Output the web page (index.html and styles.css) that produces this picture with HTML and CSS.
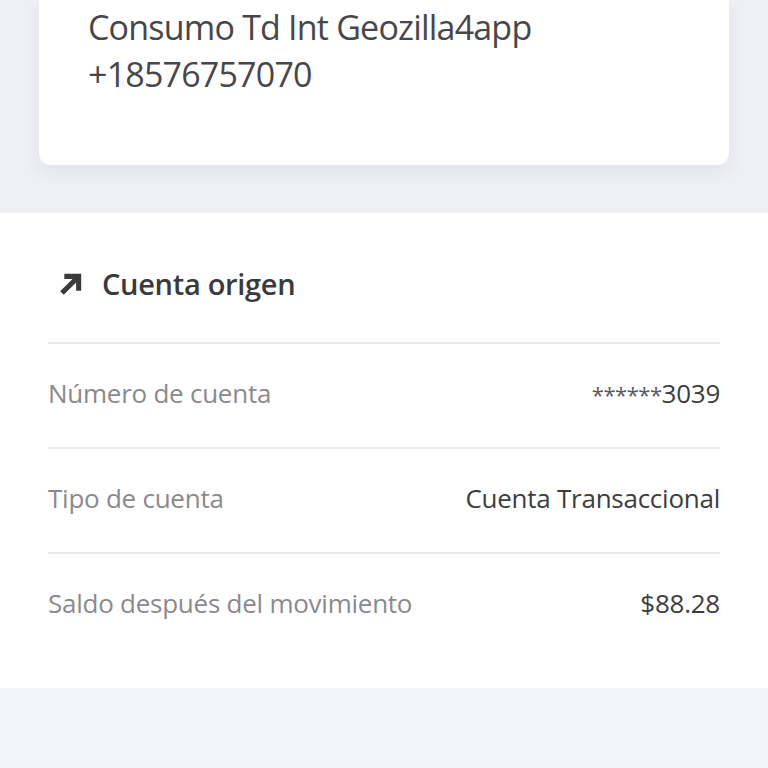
FILE: index.html
```html
<!DOCTYPE html>
<html lang="es">
<head>
<meta charset="utf-8">
<link rel="stylesheet" href="styles.css">
</head>
<body>
<div class="top">
  <div class="card">
    <p class="desc">Consumo Td Int Geozilla4app</p>
    <p class="desc">+18576757070</p>
  </div>
</div>
<section class="section">
  <div class="head">
    <svg class="arrow" viewBox="0 0 24 24" width="27" height="27">
      <path d="M6.5 2.5H21.5V17.5H17V10.2L6 21.2 2.8 18 13.8 7H6.5Z" fill="#3a3a3d"/>
    </svg>
    <h2 class="title">Cuenta origen</h2>
  </div>
  <div class="row"><span class="label">Número de cuenta</span><span class="value"><span class="mask">******</span>3039</span></div>
  <div class="row"><span class="label">Tipo de cuenta</span><span class="value">Cuenta Transaccional</span></div>
  <div class="row"><span class="label">Saldo después del movimiento</span><span class="value">$88.28</span></div>
</section>
<div class="bottom"></div>
</body>
</html>
```
FILE: styles.css
```css
html, body {
  margin: 0;
  padding: 0;
  background: #f4f5f9;
  font-family: "Open Sans", "Liberation Sans", sans-serif;
}
.top {
  background: #eff0f4;
  height: 213px;
  padding: 0 39px;
  box-sizing: border-box;
}
.card {
  background: #ffffff;
  height: 165px;
  box-sizing: border-box;
  padding: 4px 49px 0;
  border-radius: 0 0 12px 12px;
  box-shadow: 0 6px 18px rgba(40, 45, 70, 0.07);
}
.desc {
  margin: 0;
  font-size: 34px;
  line-height: 47px;
  color: #47474a;
  letter-spacing: -0.8px;
}
.section {
  background: #ffffff;
  padding: 0 48px 31px;
}
.head {
  display: flex;
  align-items: center;
  gap: 18px;
  height: 129px;
  box-sizing: border-box;
  padding: 48px 0 35px 9px;
}
.arrow {
  flex: none;
}
.title {
  margin: 0;
  font-size: 29px;
  line-height: 46px;
  font-weight: 600;
  color: #3a3a3d;
  letter-spacing: -0.3px;
}
.row {
  display: flex;
  align-items: center;
  justify-content: space-between;
  height: 105px;
  box-sizing: border-box;
  border-top: 2px solid #ebebed;
  padding-bottom: 6px;
  font-size: 26px;
  letter-spacing: -0.25px;
}
.label {
  color: #8a8a8e;
}
.value {
  color: #3d3d40;
}
.mask {
  font-size: 22px;
  color: #5a5a5e;
  letter-spacing: -0.5px;
}
.bottom {
  height: 80px;
}
```
